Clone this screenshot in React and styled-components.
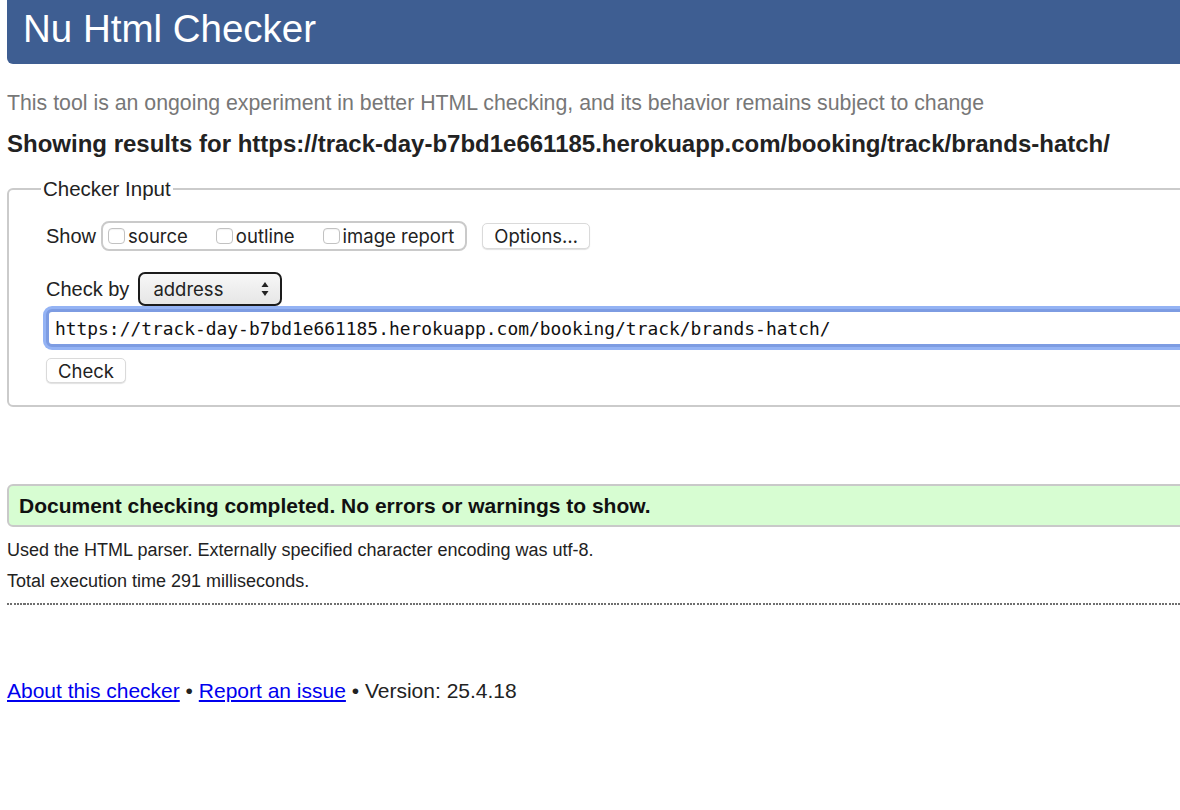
import React from 'react';
import styled, { createGlobalStyle } from 'styled-components';

const GlobalStyle = createGlobalStyle`
  html, body {
    margin: 0;
    padding: 0;
    overflow: hidden;
    background: #fff;
  }
  body {
    font-family: "Liberation Sans", Arial, sans-serif;
    color: #222;
  }
`;

const Page = styled.div`
  width: 1230px;
  padding-left: 7px;
  box-sizing: border-box;
`;

const Header = styled.h1`
  margin: 0;
  height: 64px;
  box-sizing: border-box;
  padding-left: 16px;
  background: #3e5e92;
  color: #fff;
  font-size: 38.5px;
  font-weight: normal;
  line-height: 58px;
  border-radius: 0 0 0 6px;
`;

const Subtitle = styled.p`
  margin: 25px 0 0;
  font-size: 21.3px;
  line-height: 28px;
  color: #777;
`;

const Results = styled.h2`
  margin: 12px 0 0;
  font-size: 24px;
  line-height: 30px;
  font-weight: bold;
  color: #222;
`;

const Fieldset = styled.fieldset`
  margin: 18px 0 0;
  padding: 0 0 22px 37px;
  border: 2px solid #cbcbcb;
  border-radius: 6px;
  min-width: 0;
`;

const Legend = styled.legend`
  margin-left: -5px;
  padding: 0 2px;
  font-size: 20.5px;
  line-height: 24px;
  color: #222;
`;

const Row = styled.div`
  display: flex;
  align-items: center;
  margin-top: ${(p) => p.$top}px;
`;

const Label = styled.span`
  font-size: 20px;
  line-height: 24px;
  margin-right: ${(p) => p.$gap}px;
`;

const Group = styled.div`
  display: flex;
  align-items: center;
  height: 30px;
  box-sizing: border-box;
  padding: 0 11px 0 5px;
  border: 2px solid #cacaca;
  border-radius: 8px;
  gap: 28px;
`;

const Option = styled.label`
  display: flex;
  align-items: center;
  gap: 3px;
  font-family: Inter, "Liberation Sans", sans-serif;
  font-size: 18.5px;
  color: #222;
`;

const Box = styled.input.attrs({ type: 'checkbox' })`
  appearance: none;
  margin: 0;
  width: 17px;
  height: 16px;
  border: 1px solid #c2c2c2;
  border-radius: 4px;
  background: #fff;
  box-shadow: inset 0 1px 1px rgba(0, 0, 0, 0.05);
`;

const Button = styled.button`
  height: ${(p) => p.$h}px;
  width: ${(p) => p.$w}px;
  margin: 0 0 0 ${(p) => p.$left || 0}px;
  padding: 0;
  background: #fff;
  border: 1px solid #dadada;
  border-radius: 5px;
  box-shadow: 0 1px 1px rgba(0, 0, 0, 0.12);
  font-family: Inter, "Liberation Sans", sans-serif;
  font-size: 18.5px;
  color: #222;
`;

const Select = styled.div`
  display: flex;
  align-items: center;
  justify-content: space-between;
  width: 144px;
  height: 34px;
  box-sizing: border-box;
  padding: 0 11px 0 13px;
  border: 2px solid #1c1c1c;
  border-radius: 7px;
  background: linear-gradient(#f7f7f7, #e6e6e6);
  font-family: Inter, "Liberation Sans", sans-serif;
  font-size: 18.5px;
  color: #222;
`;

const UrlInput = styled.input`
  display: block;
  width: 100%;
  height: 38px;
  box-sizing: border-box;
  margin: 3px 0 0;
  padding: 0 0 0 6px;
  border: 3px solid #7d9ce2;
  border-radius: 6px;
  box-shadow: 0 0 0 3px #94b3f4;
  outline: none;
  font-family: "DejaVu Sans Mono", "Liberation Mono", monospace;
  font-size: 17.9px;
  color: #111;
`;

const ButtonRow = styled.div`
  margin-top: 11px;
  display: flex;
`;

const Success = styled.div`
  margin-top: 77px;
  height: 43px;
  box-sizing: border-box;
  padding-left: 10px;
  border: 2px solid #c9c9c9;
  border-radius: 6px;
  background: #d7fdd2;
  font-size: 21px;
  font-weight: bold;
  line-height: 39px;
  color: #111;
`;

const Info = styled.div`
  margin-top: 8px;
  font-size: 18px;
  line-height: 31px;
  color: #222;
`;

const Dotted = styled.div`
  margin-top: 6px;
  height: 2px;
  background-image: repeating-linear-gradient(90deg, #6f6f6f 0 2px, transparent 2px 3.3px);
`;

const Footer = styled.p`
  margin: 72px 0 0;
  font-size: 21px;
  line-height: 28px;
  color: #222;
`;

const Link = styled.a`
  color: #0000ee;
  text-decoration: underline;
`;

const Arrows = () => (
  <svg width="8" height="14" viewBox="0 0 8 14">
    <path d="M4 0 L7.5 5 L0.5 5 Z" fill="#222" />
    <path d="M4 14 L7.5 9 L0.5 9 Z" fill="#222" />
  </svg>
);

const url = 'https://track-day-b7bd1e661185.herokuapp.com/booking/track/brands-hatch/';

export default function App() {
  return (
    <Page>
      <GlobalStyle />
      <Header>Nu Html Checker</Header>
      <Subtitle>
        This tool is an ongoing experiment in better HTML checking, and its behavior remains subject to change
      </Subtitle>
      <Results>Showing results for {url}</Results>

      <Fieldset>
        <Legend>Checker Input</Legend>
        <Row $top={20}>
          <Label $gap={5}>Show</Label>
          <Group>
            <Option><Box />source</Option>
            <Option><Box />outline</Option>
            <Option><Box />image report</Option>
          </Group>
          <Button $w={108} $h={26} $left={15}>Options…</Button>
        </Row>
        <Row $top={21}>
          <Label $gap={9}>Check by</Label>
          <Select>
            <span>address</span>
            <Arrows />
          </Select>
        </Row>
        <UrlInput defaultValue={url} />
        <ButtonRow>
          <Button $w={80} $h={25}>Check</Button>
        </ButtonRow>
      </Fieldset>

      <Success>Document checking completed. No errors or warnings to show.</Success>
      <Info>
        Used the HTML parser. Externally specified character encoding was utf-8.
        <br />
        Total execution time 291 milliseconds.
      </Info>
      <Dotted />
      <Footer>
        <Link href="#">About this checker</Link> • <Link href="#">Report an issue</Link> • Version: 25.4.18
      </Footer>
    </Page>
  );
}
